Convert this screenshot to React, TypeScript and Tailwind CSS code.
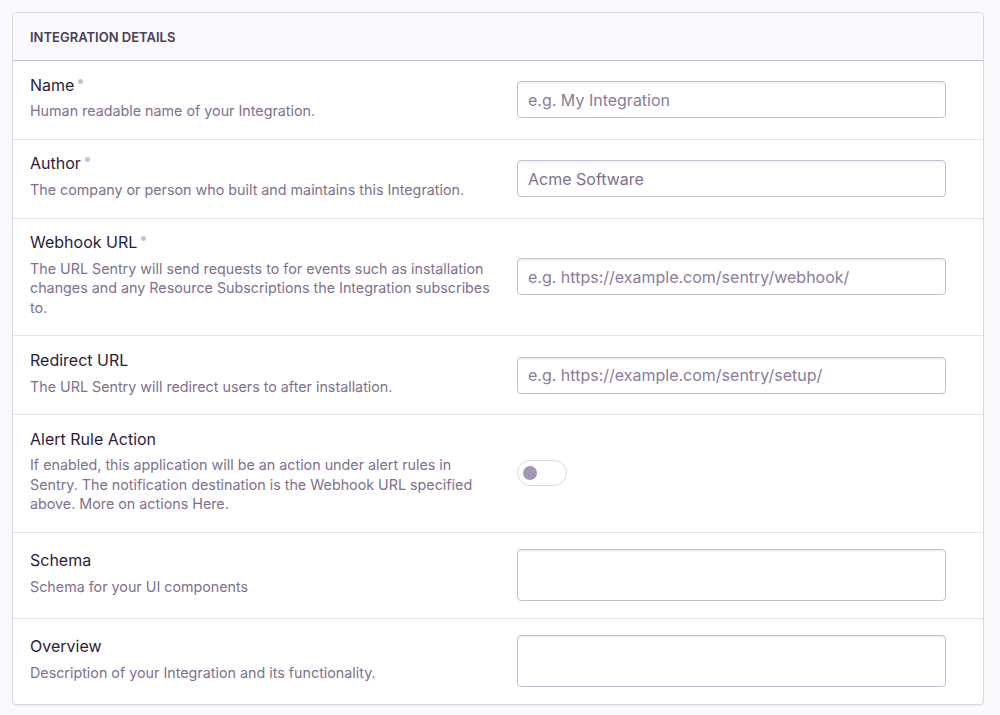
import { ReactNode } from "react";

interface FieldProps {
    label: string;
    help: ReactNode;
    required?: boolean;
    children: ReactNode;
    last?: boolean;
}

function Field({ label, help, required, children, last }: FieldProps) {
    return (
        <div className={`flex items-center pl-[17px] pr-[37px] py-[13.5px] ${last ? "" : "border-b border-[#e7e1ec]"}`}>
            <div className="flex-1 pr-[22px] pb-[4.5px]">
                <div className="flex items-start text-[16px] leading-[21px] text-[#2b1d38]">
                    {label}
                    {required && <span className="ml-[4px] mt-[4px] w-[5px] h-[5px] rounded-full bg-[#c9c1d2]" />}
                </div>
                <p className="mt-[5.75px] text-[14.3px] leading-[19.5px] text-[#80708f]">{help}</p>
            </div>
            <div className="w-[429px]">{children}</div>
        </div>
    );
}

function TextInput({ placeholder, value }: { placeholder?: string; value?: string }) {
    return (
        <input
            type="text"
            placeholder={placeholder}
            defaultValue={value}
            className="block w-full h-[37px] px-[10px] text-[16px] text-[#80708f] placeholder:text-[#8b7c9a] bg-white border border-[#c6becf] rounded-[4px] shadow-[inset_0_2px_0_rgba(0,0,0,0.04)] outline-none"
        />
    );
}

function TextArea() {
    return (
        <textarea className="block w-full h-[52px] my-[3px] px-[10px] py-2 text-[16px] bg-white border border-[#c6becf] rounded-[4px] shadow-[inset_0_2px_0_rgba(0,0,0,0.04)] outline-none resize-none" />
    );
}

function Toggle() {
    return (
        <div className="w-[50px] h-[26px] rounded-full border border-[#ddd6e4] bg-white flex items-center pl-[5px]">
            <div className="w-[14px] h-[14px] rounded-full bg-[#a597b4]" />
        </div>
    );
}

export default function App() {
    return (
        <div className="min-h-[715px] bg-[#faf9fb] p-3 font-['Inter',sans-serif]">
            <div className="w-[972px] bg-white border border-[#dcd6e3] rounded-[4px] shadow-[0_1px_2px_rgba(0,0,0,0.06)] overflow-hidden">
                <div className="h-[48px] flex items-center pt-[2px] px-[17px] bg-[#faf9fb] border-b border-[#c6becf] text-[13px] font-semibold uppercase text-[#4a3e56]">
                    Integration Details
                </div>
                <Field label="Name" required help="Human readable name of your Integration.">
                    <TextInput placeholder="e.g. My Integration" />
                </Field>
                <Field label="Author" required help="The company or person who built and maintains this Integration.">
                    <TextInput value="Acme Software" />
                </Field>
                <Field
                    label="Webhook URL"
                    required
                    help="The URL Sentry will send requests to for events such as installation changes and any Resource Subscriptions the Integration subscribes to."
                >
                    <TextInput placeholder="e.g. https://example.com/sentry/webhook/" />
                </Field>
                <Field label="Redirect URL" help="The URL Sentry will redirect users to after installation.">
                    <TextInput placeholder="e.g. https://example.com/sentry/setup/" />
                </Field>
                <Field
                    label="Alert Rule Action"
                    help="If enabled, this application will be an action under alert rules in Sentry. The notification destination is the Webhook URL specified above. More on actions Here."
                >
                    <Toggle />
                </Field>
                <Field label="Schema" help="Schema for your UI components">
                    <TextArea />
                </Field>
                <Field label="Overview" help="Description of your Integration and its functionality." last>
                    <TextArea />
                </Field>
            </div>
        </div>
    );
}
